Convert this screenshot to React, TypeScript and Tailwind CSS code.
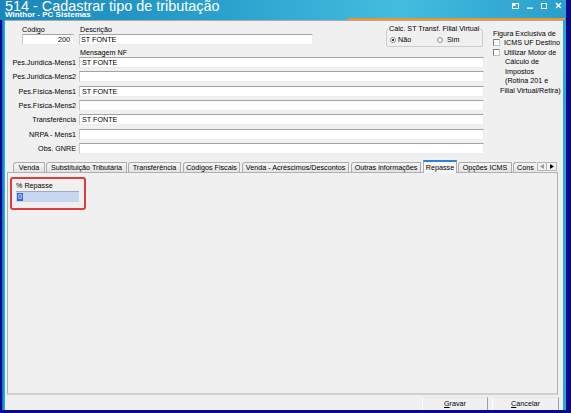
import React from "react";

type Row = { label: string; value: string };

const rows: Row[] = [
  { label: "Pes.Jurídica-Mens1", value: "ST FONTE" },
  { label: "Pes.Jurídica-Mens2", value: "" },
  { label: "Pes.Física-Mens1", value: "ST FONTE" },
  { label: "Pes.Física-Mens2", value: "" },
  { label: "Transferência", value: "ST FONTE" },
  { label: "NRPA - Mens1", value: "" },
  { label: "Obs. GNRE", value: "" },
];

type Tab = { label: string; cls: string; active?: boolean; clipped?: boolean };

const tabs: Tab[] = [
  { label: "Venda", cls: "w-[32px] mr-[1px]" },
  { label: "Substituição Tributária", cls: "w-[81px] mr-[1px]" },
  { label: "Transferência", cls: "w-[53px] mr-[2px]" },
  { label: "Códigos Fiscais", cls: "w-[57px] mr-[2px]" },
  { label: "Venda - Acréscimos/Descontos", cls: "w-[107px] mr-[2px]" },
  { label: "Outras informações", cls: "w-[70px] mr-[2px]" },
  { label: "Repasse", cls: "w-[34px] mr-[1px]", active: true },
  { label: "Opções ICMS", cls: "w-[54px] mr-[1px]" },
  { label: "Cons", cls: "w-[23px] mr-[1px]", clipped: true },
];

function Edit({ children, className = "" }: { children?: React.ReactNode; className?: string }) {
  return (
    <div
      className={`h-[11px] bg-white border border-t-[#a3a3a3] border-l-[#cbcbcb] border-r-[#ececec] border-b-[#ececec] leading-[9px] whitespace-nowrap overflow-hidden ${className}`}
    >
      {children}
    </div>
  );
}

function Check() {
  return (
    <span className="w-[7px] h-[7px] shrink-0 bg-white border border-t-[#7d7d7d] border-l-[#7d7d7d] border-r-[#c4c4c4] border-b-[#c4c4c4]" />
  );
}

function Radio({ checked }: { checked?: boolean }) {
  return (
    <span className="w-[6px] h-[6px] shrink-0 rounded-full bg-white border border-[#8c8c8c] flex items-center justify-center">
      {checked && <span className="w-[2px] h-[2px] rounded-full bg-black" />}
    </span>
  );
}

function WindowControls() {
  return (
    <div className="flex items-start pt-[2px] pr-[4px] gap-[8px]">
      <svg width="7" height="6" viewBox="0 0 7 6" className="mt-[1px]">
        <rect x="0.5" y="0.5" width="6" height="5" fill="none" stroke="#fff" strokeWidth="1" />
        <rect x="0.5" y="0.5" width="3" height="2.5" fill="#fff" />
      </svg>
      <svg width="6" height="6" viewBox="0 0 6 6" className="mt-[1px]">
        <rect x="0" y="4.5" width="6" height="1.3" fill="#fff" />
      </svg>
      <svg width="6" height="6" viewBox="0 0 6 6" className="mt-[1px]">
        <rect x="0.5" y="0.5" width="5" height="5" fill="none" stroke="#fff" strokeWidth="1" />
      </svg>
      <svg width="7" height="7" viewBox="0 0 7 7">
        <path d="M1 1 L6 6 M6 1 L1 6" stroke="#fff" strokeWidth="1.4" />
      </svg>
    </div>
  );
}

function TabStrip() {
  return (
    <div className="mt-[6px] ml-[8px] h-[12px] flex items-end">
      {tabs.map((t) =>
        t.active ? (
          <div
            key={t.label}
            className={`relative z-10 h-[13px] -mb-[1px] bg-[#f7f7f7] border-x border-x-[#acacac] border-t-2 border-t-[#2f7fdc] flex items-center justify-center leading-[9px] whitespace-nowrap ${t.cls}`}
          >
            {t.label}
          </div>
        ) : (
          <div
            key={t.label}
            className={`h-[10px] border border-b-0 border-[#acacac] rounded-tl-[3px] bg-gradient-to-b from-[#f6f6f6] to-[#e2e2e2] flex items-center leading-[9px] whitespace-nowrap overflow-hidden ${
              t.clipped ? "justify-start pl-[3px] border-r-0" : "justify-center"
            } ${t.cls}`}
          >
            {t.label}
          </div>
        )
      )}
      <div className="flex mb-[1px]">
        <div className="w-[10px] h-[9px] border border-[#b5b5b5] bg-[#f3f3f3] flex items-center justify-center">
          <svg width="4" height="5" viewBox="0 0 4 5">
            <polygon points="4,0 4,5 0,2.5" fill="#9a9a9a" />
          </svg>
        </div>
        <div className="w-[10px] h-[9px] border border-l-0 border-[#b5b5b5] bg-[#f3f3f3] flex items-center justify-center">
          <svg width="4" height="5" viewBox="0 0 4 5">
            <polygon points="0,0 0,5 4,2.5" fill="#000" />
          </svg>
        </div>
      </div>
    </div>
  );
}

export default function App() {
  return (
    <div className="w-[571px] h-[413px] overflow-hidden bg-[#0a0a8a] flex flex-col pr-[5px] pb-[3px] font-['Liberation_Sans',Arial,sans-serif]">
      {/* title bar */}
      <div className="h-[20px] shrink-0 flex flex-col bg-[linear-gradient(90deg,#1b86ba_0%,#2aa2ce_40%,#44bcdf_70%,#2a9fcc_100%)]">
        <div className="h-[18px] flex justify-between">
          <div className="pl-[5px] text-white">
            <div className="text-[14.4px] leading-[12px] -mt-[0.5px] whitespace-nowrap">
              514 - Cadastrar tipo de tributação
            </div>
            <div className="text-[8px] leading-[6px] font-bold whitespace-nowrap">
              Winthor - PC Sistemas
            </div>
          </div>
          <WindowControls />
        </div>
        <div className="h-[2px] flex justify-end">
          <div className="w-[217px] mr-[1px] bg-[#e79a2c]" />
        </div>
      </div>

      {/* window frame + client area */}
      <div className="flex-1 flex min-h-0">
        <div className="w-[2px]" />
        <div className="w-[3px] bg-gradient-to-r from-[#1b5fd2] to-[#27bfd8]" />
        <div className="w-[558px] bg-[#f0f0f0] border-t border-[#a9a9a9] flex flex-col text-[7.2px] text-black">
          <div className="flex pt-[5px]">
            {/* fields */}
            <div className="w-[479px] flex flex-col">
              <div className="h-[19px] flex items-start">
                <div className="ml-[17px] w-[52px] flex flex-col">
                  <div className="leading-[8px]">Código</div>
                  <Edit className="text-right pr-[3px]">200</Edit>
                </div>
                <div className="ml-[5px] w-[234px] flex flex-col">
                  <div className="leading-[8px] pl-[1px]">Descrição</div>
                  <Edit className="pl-[1px]">ST FONTE</Edit>
                </div>
                <fieldset className="ml-[73px] -mt-[1px] w-[97px] h-[22px] border border-[#cdcdcd] rounded-[2px]">
                  <legend className="ml-[1px] px-[1px] leading-[8px] whitespace-nowrap">
                    Calc. ST Transf. Filial Virtual
                  </legend>
                  <div className="mt-[3px] h-[8px] flex items-center pl-[3px]">
                    <div className="w-[47px] flex items-center gap-[2px]">
                      <Radio checked />
                      <span className="leading-[8px]">Não</span>
                    </div>
                    <div className="flex items-center gap-[4px]">
                      <Radio />
                      <span className="leading-[8px]">Sim</span>
                    </div>
                  </div>
                </fieldset>
              </div>

              <div className="mt-[3.5px] ml-[75px] leading-[8px]">Mensagem NF</div>

              <div className="mt-[0.5px] flex flex-col gap-[3.33px]">
                {rows.map((r) => (
                  <div key={r.label} className="h-[11px] flex items-center">
                    <div className="w-[71px] text-right leading-[9px] whitespace-nowrap">{r.label}</div>
                    <Edit className="ml-[3px] w-[405px] pl-[2px]">{r.value}</Edit>
                  </div>
                ))}
              </div>
            </div>

            {/* options */}
            <div className="ml-[9px] flex flex-col whitespace-nowrap">
              <div className="mt-[3px] h-[9px] leading-[9px]">Figura Exclusiva de</div>
              <div className="h-[9px] flex items-center gap-[4px]">
                <Check />
                <span className="leading-[9px]">ICMS UF Destino</span>
              </div>
              <div className="h-[10px] flex items-center gap-[4px]">
                <Check />
                <span className="leading-[9px]">Utilizar Motor de</span>
              </div>
              <div className="pl-[12px] leading-[9.6px]">
                Cálculo de
                <br />
                Impostos
                <br />
                (Rotina 201 e
              </div>
              <div className="pl-[7px] leading-[9.6px]">Filial Virtual/Retira)</div>
            </div>
          </div>

          <TabStrip />

          {/* tab page */}
          <div className="ml-[2px] w-[551px] h-[223px] shrink-0 border border-[#b0b0b0] border-b-2 border-b-[#cfcfcf] bg-[#f0f0f0]">
            <div className="ml-[2px] mt-[4px] w-[76px] h-[33px] border-2 border-[#e23b3b] rounded-[3px] pt-[3px] pl-[4px]">
              <div className="leading-[8px]">% Repasse</div>
              <div className="mt-[1px] w-[63px] h-[11px] bg-[#c7d7f1] border-t border-t-[#9fa9b8] flex items-center pl-[1px]">
                <span className="bg-[#3468cc] text-white px-[1px] leading-[8px]">0</span>
              </div>
            </div>
          </div>

          {/* buttons */}
          <div className="flex-1 flex justify-end items-start pt-[2px] pr-[4px] gap-[4px]">
            <div className="w-[66px] h-[13px] border border-l-white border-r-[#a0a0a0] border-t-[#e6e6e6] border-b-0 flex items-center justify-center leading-[9px]">
              <span>
                <span className="underline">G</span>ravar
              </span>
            </div>
            <div className="w-[67px] h-[13px] border border-l-white border-r-[#a0a0a0] border-t-[#e6e6e6] border-b-0 flex items-center justify-center leading-[9px]">
              <span>
                <span className="underline">C</span>ancelar
              </span>
            </div>
          </div>
        </div>
        <div className="w-[3px] bg-[#2aa9cf]" />
      </div>
    </div>
  );
}
